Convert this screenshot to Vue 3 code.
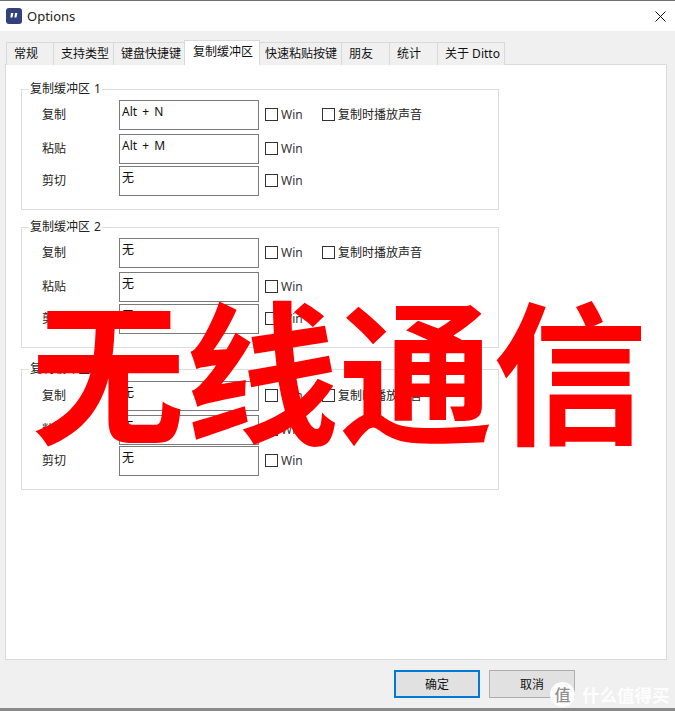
<script setup>
const tabs = [
  { label: '常规', w: 48, pad: 7 },
  { label: '支持类型', w: 60, pad: 7 },
  { label: '键盘快捷键', w: 71, pad: 7 },
  { label: '复制缓冲区', w: 76, pad: 8, active: true },
  { label: '快速粘贴按键', w: 82, pad: 5 },
  { label: '朋友', w: 48, pad: 7 },
  { label: '统计', w: 48, pad: 7 },
  { label: '关于 Ditto', w: 67, pad: 7 },
]
const groups = [
  { title: '复制缓冲区 1', gap: 9, values: ['Alt + N', 'Alt + M', '无'] },
  { title: '复制缓冲区 2', gap: 13, values: ['无', '无', '无'] },
  { title: '复制缓冲区 3', gap: 0, third: true, values: ['无', '无', '无'] },
]
const labels = ['复制', '粘贴', '剪切']
</script>

<template>
  <div class="window">
    <header class="titlebar">
      <svg class="logo" width="16" height="16" viewBox="0 0 16 16">
        <rect width="16" height="16" rx="3" fill="#33407a" />
        <path d="M5 5h2.400L6.400 9.600H4.400zM9 5h2.400l-1 4.600H8.400z" fill="#fff" />
      </svg>
      <span class="title">Options</span>
      <svg class="close" width="11" height="11" viewBox="0 0 11 11">
        <path d="M.5.500l10 10M10.500.500l-10 10" stroke="#111" stroke-width="1" fill="none" />
      </svg>
    </header>

    <main class="body">
      <nav class="tabs">
        <div
          v-for="tab in tabs"
          :key="tab.label"
          class="tab"
          :class="{ active: tab.active }"
          :style="{ width: tab.w + 'px', paddingLeft: tab.pad + 'px' }"
        >{{ tab.label }}</div>
      </nav>

      <section class="panel">
        <fieldset
          v-for="group in groups"
          :key="group.title"
          class="group"
          :class="{ third: group.third }"
          :style="{ marginBottom: group.gap + 'px' }"
        >
          <legend>{{ group.title }}</legend>
          <div
            v-for="(value, i) in group.values"
            :key="i"
            class="row"
            :class="'row' + i"
          >
            <span class="label">{{ labels[i] }}</span>
            <div class="box">{{ value }}</div>
            <span class="check"></span>
            <span class="win">Win</span>
            <template v-if="i === 0">
              <span class="check sound"></span>
              <span class="soundtext">复制时播放声音</span>
            </template>
          </div>
        </fieldset>
      </section>

      <footer class="footer">
        <button class="btn primary">确定</button>
        <button class="btn">取消</button>
      </footer>
    </main>

    <div class="stamp">无线通信</div>
    <div class="watermark">
      <span class="coin">值</span>
      <span class="brand">什么值得买</span>
    </div>
  </div>
</template>

<style>
html, body { margin: 0; background: #fff; }
</style>

<style scoped>
.window {
  position: relative;
  width: 675px;
  height: 711px;
  overflow: hidden;
  box-sizing: border-box;
  border-top: 1px solid #707070;
  border-bottom: 3px solid #8a8a8a;
  font-family: "Noto Sans", "Noto Sans CJK SC", sans-serif;
  font-size: 12px;
  color: #111;
  background: #f0f0f0;
  display: flex;
  flex-direction: column;
}
.titlebar {
  height: 30px;
  flex: none;
  background: #fff;
  display: flex;
  align-items: center;
  padding: 0 9px 0 6px;
}
.logo { flex: none; }
.title { margin-left: 5px; font-size: 13px; color: #222; }
.close { margin-left: auto; }
.body {
  flex: 1;
  min-height: 0;
  display: flex;
  flex-direction: column;
  padding: 10px 8px 0 5px;
}
.tabs {
  height: 24px;
  flex: none;
  display: flex;
  align-items: flex-end;
  padding-left: 1px;
  position: relative;
  z-index: 1;
  margin-bottom: -1px;
}
.tab {
  box-sizing: border-box;
  height: 23px;
  border: 1px solid #d9d9d9;
  border-left-width: 0;
  border-bottom-width: 0;
  background: #f0f0f0;
  line-height: 22px;
  white-space: nowrap;
}
.tab:first-child { border-left-width: 1px; }
.tab.active {
  height: 25px;
  background: #fff;
  border-left-width: 1px;
  margin-left: -1px;
  line-height: 21px;
}
.panel {
  box-sizing: border-box;
  height: 596px;
  flex: none;
  background: #fff;
  border: 1px solid #d9d9d9;
  padding: 16px 0 0 15px;
}
.group {
  box-sizing: border-box;
  width: 478px;
  height: 129px;
  margin: 0;
  padding: 3px 0 0 0;
  border: 1px solid #dcdcdc;
  min-width: 0;
}
.group.third { padding-top: 4px; }
.group.third .row2 { margin-top: 1px; }
.group legend {
  margin-left: 7px;
  padding: 0 1px;
  line-height: 16px;
  height: 16px;
  font-size: 12px;
  word-spacing: 1px;
  color: #222;
}
.row {
  height: 30px;
  display: flex;
  align-items: center;
  padding-left: 20px;
}
.row1 { margin-top: 4px; }
.row2 { margin-top: 2px; }
.label { width: 77px; flex: none; color: #222; margin-bottom: 2px; }
.box {
  box-sizing: border-box;
  width: 140px;
  height: 30px;
  flex: none;
  border: 1px solid #7a7a7a;
  background: #fff;
  padding: 1px 2px 0;
  line-height: 20px;
  word-spacing: 2px;
  color: #111;
}
.check {
  box-sizing: border-box;
  flex: none;
  width: 13px;
  height: 13px;
  border: 1px solid #333;
  background: #fff;
  margin: 0 0 2px 6px;
}
.win { margin: 0 0 2px 3px; color: #333; width: 41px; flex: none; }
.check.sound { margin-left: 0; }
.soundtext { margin: 0 0 2px 3px; color: #222; white-space: nowrap; }
.footer {
  flex: 1;
  display: flex;
  gap: 9px;
  padding: 10px 0 0 389px;
  align-items: flex-start;
}
.btn {
  box-sizing: border-box;
  width: 86px;
  height: 28px;
  padding: 0;
  background: #e1e1e1;
  border: 1px solid #adadad;
  font: inherit;
  color: #111;
}
.btn.primary { border: 2px solid #0078d7; }
.stamp {
  position: absolute;
  left: 31px;
  top: 270px;
  font-family: "Noto Sans CJK SC", sans-serif;
  font-weight: 700;
  font-size: 154px;
  line-height: 190px;
  color: #f00;
  white-space: nowrap;
}
.watermark {
  position: absolute;
  left: 550px;
  top: 681px;
  display: flex;
  align-items: center;
}
.coin {
  box-sizing: border-box;
  width: 25px;
  height: 25px;
  border-radius: 50%;
  background: rgba(255, 255, 255, 0.92);
  color: #8f8f8f;
  font-family: "Noto Sans CJK SC", sans-serif;
  font-weight: 500;
  font-size: 16px;
  line-height: 24px;
  text-align: center;
}
.brand {
  margin-left: 7px;
  font-family: "Noto Sans CJK SC", sans-serif;
  font-weight: 700;
  font-size: 17.500px;
  color: rgba(255, 255, 255, 0.92);
  white-space: nowrap;
}
</style>
